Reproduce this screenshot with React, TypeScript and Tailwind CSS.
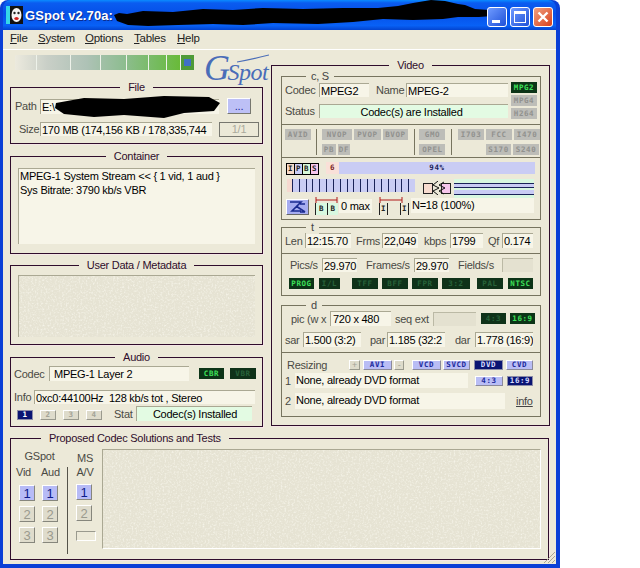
import { twMerge } from "tailwind-merge";

const font = "font-['Liberation_Sans',Arial,sans-serif]";

function Group({ label, className, left, children }: { label: string; className: string; left?: boolean; children: React.ReactNode }) {
  return (
    <div className={`relative border border-[#2f0d2c] shadow-[1px_1px_0_#f5e6e6] ${className}`}>
      <div className={`absolute inset-x-0 -top-[8px] flex ${left ? "justify-start pl-[30px]" : "justify-center"}`}>
        <span className="bg-[#ece9d8] px-[8px] text-[11px] leading-[14px] text-[#2f0d2c]">{label}</span>
      </div>
      {children}
    </div>
  );
}

function SubGroup({ label, className, children }: { label: string; className: string; children: React.ReactNode }) {
  return (
    <div className={`relative border border-[#77745f] ${className}`}>
      <div className="absolute left-[24px] -top-[7px] bg-[#ece9d8] px-[5px] text-[11px] leading-[13px] text-[#444]">{label}</div>
      {children}
    </div>
  );
}

function Field({ className, children }: { className: string; children?: React.ReactNode }) {
  return (
    <div className={twMerge("shrink-0 overflow-hidden whitespace-nowrap border-l border-t border-[#aaa893] bg-[#f7f5e8] pl-[1px] text-[11px] leading-[14px] text-black", className)}>
      {children}
    </div>
  );
}

function Lbl({ className, children }: { className?: string; children: React.ReactNode }) {
  return <span className={`shrink-0 whitespace-nowrap text-[11px] leading-[14px] text-[#4a4a44] ${className ?? ""}`}>{children}</span>;
}

const pixel = "font-['DejaVu_Sans_Mono',monospace] font-bold text-[7.5px] leading-none tracking-[0.6px]";

function Tag({ className, children }: { className: string; children: string }) {
  return <div className={`flex h-[11px] shrink-0 items-center justify-center bg-[#bdbdb8] text-[#91918e] ${pixel} ${className}`}>{children}</div>;
}

function Led({ on, className, children }: { on?: boolean; className: string; children: string }) {
  return (
    <div className={`flex h-[11px] shrink-0 items-center justify-center ${on ? "bg-[#0c3417] text-[#3ee05a]" : "bg-[#0f3219] text-[#28623a]"} ${pixel} ${className}`}>
      {children}
    </div>
  );
}

function SizeBtn({ active, className, children }: { active?: boolean; className: string; children: string }) {
  return (
    <div className={`flex h-[10px] shrink-0 items-center justify-center border ${active ? "border-[#8d8da8] bg-[#0a1472] text-[#d8dcff]" : "border-t-white border-l-white border-r-[#8b8a9b] border-b-[#8b8a9b] bg-[#b9bdf5] text-[#1c2a9c]"} ${pixel} ${className}`}>
      {children}
    </div>
  );
}

function NumBtn({ on, className, children }: { on?: boolean; className?: string; children: string }) {
  return (
    <div className={`flex h-[16px] w-[16px] items-center justify-center border border-t-white border-l-white border-r-[#86867c] border-b-[#86867c] text-[13px] leading-none ${on ? "bg-[#b7bbf6] text-[#0d1c8a]" : "bg-[#dfdccc] text-[#9a9a8e]"} ${className ?? ""}`}>
      {children}
    </div>
  );
}

function Pick({ on, children }: { on?: boolean; children: string }) {
  return (
    <div className={`flex h-[10px] w-[16px] shrink-0 items-center justify-center border ${on ? "border-[#8d8da8] bg-[#0a1472] text-white" : "border-t-white border-l-white border-r-[#9a9a8e] border-b-[#9a9a8e] bg-[#dedbcb] text-[#a3a397]"} ${pixel}`}>
      {children}
    </div>
  );
}

function MiniFrame({ className, children }: { className: string; children: string }) {
  return <div className={`flex h-[12px] w-[9px] items-center justify-center border border-black text-[#222] ${pixel} ${className}`}>{children}</div>;
}

function Scribble({ d, className, w, h }: { d: string; className: string; w: number; h: number }) {
  return (
    <svg className={className} width={w} height={h} viewBox={`0 0 ${w} ${h}`}>
      <path d={d} fill="#000" />
    </svg>
  );
}

function Speck() {
  return (
    <svg className="absolute inset-0 h-full w-full" aria-hidden>
      <filter id="speck">
        <feTurbulence type="fractalNoise" baseFrequency="0.55" numOctaves="2" seed="4" />
        <feColorMatrix values="0 0 0 0 0.98 0 0 0 0 0.97 0 0 0 0 0.9 0 0 0 1.6 -0.75" />
      </filter>
      <rect width="100%" height="100%" filter="url(#speck)" />
    </svg>
  );
}

function TitleBar() {
  return (
    <div className="relative flex h-[30px] shrink-0 items-center rounded-t-[8px] bg-[linear-gradient(180deg,#0a8bff_0%,#0a5cf0_10%,#0550e8_45%,#0861f6_85%,#0344cf_100%)] pl-[3px]">
      <svg width="17" height="18" viewBox="0 0 17 18" className="shrink-0">
        <rect x="0" y="0" width="4" height="18" fill="#35d8e8" />
        <rect x="4" y="0" width="13" height="18" fill="#111" />
        <ellipse cx="10.5" cy="9" rx="5" ry="7" fill="#f4f4f4" />
        <circle cx="8.5" cy="7" r="1.2" fill="#222" />
        <circle cx="12.5" cy="7" r="1.2" fill="#222" />
        <ellipse cx="10.5" cy="12.5" rx="2.2" ry="1.6" fill="#d02020" />
      </svg>
      <span className="ml-[2px] text-[13px] font-bold leading-none tracking-[0.1px] text-white [text-shadow:1px_1px_0_#0a2c90]">GSpot v2.70a:</span>
      <Scribble
        w={385}
        h={30}
        className="absolute left-[110px] top-0"
        d="M1 15 L6 13 L14 14 L30 11 L60 12 L90 9 L120 10 L150 8 L190 9 L230 8 L265 8 L285 6 L300 3 L318 0 L332 1 L345 4 L352 5 L362 9 L376 10 L384 13 L380 16 L366 17 L345 17 L330 19 L300 20 L270 19 L240 22 L205 24 L160 23 L130 25 L100 24 L65 25 L35 26 L15 25 L4 21 Z"
      />
      <div className="absolute right-[3px] top-[7px] flex gap-[3px]">
        <div className="relative h-[20px] w-[20px] rounded-[3px] border border-white bg-[linear-gradient(135deg,#6f9bff,#1e50d8)]">
          <div className="absolute bottom-[3px] left-[4px] h-[3px] w-[8px] bg-white" />
        </div>
        <div className="relative h-[20px] w-[20px] rounded-[3px] border border-white bg-[linear-gradient(135deg,#6f9bff,#1e50d8)]">
          <div className="absolute inset-x-[3px] bottom-[3px] top-[3px] border border-t-[3px] border-white" />
        </div>
        <div className="flex h-[20px] w-[20px] items-center justify-center rounded-[3px] border border-white bg-[linear-gradient(135deg,#f0a080,#d8401c)]">
          <svg width="12" height="12" viewBox="0 0 12 12">
            <path d="M1.5 1.5 L10.5 10.5 M10.5 1.5 L1.5 10.5" stroke="#fff" strokeWidth="2.4" />
          </svg>
        </div>
      </div>
    </div>
  );
}

function Menu() {
  const items: [string, string, string][] = [["F", "ile", "w-[28px]"], ["S", "ystem", "w-[47px]"], ["O", "ptions", "w-[49px]"], ["T", "ables", "w-[43px]"], ["H", "elp", "w-[30px]"]];
  return (
    <div className="flex h-[20px] shrink-0 items-center border-b border-white pl-[7px] pb-[1px]">
      {items.map(([a, b, w]) => (
        <span key={a} className={`text-[11.5px] leading-none text-[#222] ${w}`}>
          <span className="underline">{a}</span>
          {b}
        </span>
      ))}
    </div>
  );
}

function Progress() {
  const segs = ["w-[22px]", "w-[34px]", "w-[30px]", "w-[26px]", "w-[22px]", "w-[18px]", "w-[14px]"];
  return (
    <div className="ml-[5px] mt-[5px] flex h-[15px] w-[179px] shrink-0 bg-[linear-gradient(90deg,#eceade_0%,#c9cfc7_18%,#aec2b6_40%,#8fbd92_60%,#74bb5c_80%,#62ba22_100%)]">
      {segs.map((s) => (
        <div key={s} className={`border-r border-[#eef2ea] ${s}`} />
      ))}
      <div className="flex w-[13px] items-center justify-center bg-[#4f9a38]">
        <div className="h-[7px] w-[7px] bg-[#3f6fc4]" />
      </div>
    </div>
  );
}

function Logo() {
  return (
    <div className="relative ml-[10px] mt-[1px] h-[36px] w-[66px]">
      <span className="whitespace-nowrap font-['Liberation_Serif',serif] text-[24px] italic leading-[34px] tracking-[-0.5px] text-[#4a6db8]">
        <span className="-mr-[2px] text-[36px]">G</span>Spot
      </span>
      <svg width="32" height="10" viewBox="0 0 32 10" className="absolute left-[33px] top-[3px]">
        <path d="M0 8 Q16 5 32 1" stroke="#4a6db8" strokeWidth="1.2" fill="none" />
      </svg>
    </div>
  );
}

function LeftColumn() {
  return (
    <div className="w-[253px] shrink-0">
      <div className="flex h-[37px] items-start">
        <Progress />
        <Logo />
      </div>
      <Group label="File" className="h-[57px] w-[253px]">
        <div className="flex items-center pl-[4px] pt-[10px]">
          <Lbl className="w-[25px]">Path</Lbl>
          <div className="relative">
            <Field className="h-[15px] w-[179px]">E:\</Field>
            <Scribble
              w={168}
              h={24}
              className="absolute left-[14px] -top-[4px]"
              d="M2 8 L30 3 L70 4 L110 1 L155 2 L166 8 L160 16 L130 18 L110 23 L70 20 L40 22 L10 19 L1 13 Z"
            />
          </div>
          <div className="ml-[8px] flex h-[16px] w-[24px] items-center justify-center border border-t-white border-l-white border-r-[#77776f] border-b-[#77776f] bg-[#bdc0f6] text-[11px] leading-none text-[#1a2a9a]">
            ...
          </div>
        </div>
        <div className="mt-[6px] flex items-center pl-[8px]">
          <Lbl className="w-[21px]">Size</Lbl>
          <Field className="h-[14px] w-[172px]">170 MB (174,156 KB / 178,335,744</Field>
          <div className="ml-[7px] mt-[2px] flex h-[15px] w-[40px] items-center justify-center border border-[#77776f] text-[11px] leading-none text-[#aaa99c]">1/1</div>
        </div>
      </Group>
      <Group label="Container" className="mt-[12px] h-[98px] w-[253px]">
        <div className="pl-[7px] pt-[11px]">
          <Field className="h-[76px] w-[237px]">
            <div>MPEG-1 System Stream &lt;&lt; { "{" } 1 vid, 1 aud { "}" }</div>
            <div>Sys Bitrate: 3790 kb/s VBR</div>
          </Field>
        </div>
      </Group>
      <Group label="User Data / Metadata" className="mt-[11px] h-[80px] w-[253px]">
        <div className="pl-[7px] pt-[9px]">
          <div className="relative h-[62px] w-[237px] overflow-hidden border-l border-t border-[#aaa893] bg-[#e6e3d3]">
            <Speck />
          </div>
        </div>
      </Group>
      <Group label="Audio" className="mt-[12px] h-[70px] w-[253px]">
        <div className="flex items-center pl-[3px] pt-[8px]">
          <Lbl className="w-[35px]">Codec</Lbl>
          <Field className="h-[15px] w-[140px] pl-[4px]">MPEG-1 Layer 2</Field>
          <Led on className="ml-[10px] w-[25px]">CBR</Led>
          <Led className="ml-[6px] w-[26px]">VBR</Led>
        </div>
        <div className="mt-[9px] flex items-center pl-[3px]">
          <Lbl className="w-[20px]">Info</Lbl>
          <Field className="h-[14px] w-[221px] pl-[1px]">0xc0:44100Hz&nbsp; 128 kb/s tot , Stereo</Field>
        </div>
        <div className="mt-[2px] flex items-center pl-[6px]">
          <div className="flex gap-[7px] pt-[3px]">
            <Pick on>1</Pick>
            <Pick>2</Pick>
            <Pick>3</Pick>
            <Pick>4</Pick>
          </div>
          <Lbl className="ml-[12px] w-[22px]">Stat</Lbl>
          <Field className="h-[15px] w-[116px] bg-[#e3fbe3] text-center">Codec(s) Installed</Field>
        </div>
      </Group>
    </div>
  );
}

function Slots() {
  return (
    <div className="flex h-[13px] w-[128px] shrink-0 bg-[#c9ccf4]">
      <div className="w-[5px] bg-[#f6d9d0]" />
      {Array.from({ length: 18 }).map((_, i) => (
        <div key={i} className="w-[7px] border-l border-[#1a2258]" />
      ))}
    </div>
  );
}

function CodecSection() {
  return (
    <SubGroup label="c, S" className="ml-[9px] mt-[10px] w-[260px]">
      <div className="flex px-[3px] pt-[6px]">
        <div className="w-[223px]">
          <div className="flex items-center">
            <Lbl className="w-[34px]">Codec</Lbl>
            <Field className="h-[14px] w-[50px]">MPEG2</Field>
            <Lbl className="ml-[7px] w-[30px]">Name</Lbl>
            <Field className="h-[14px] w-[102px]">MPEG-2</Field>
          </div>
          <div className="mt-[7px] flex items-center">
            <Lbl className="w-[34px]">Status</Lbl>
            <Field className="h-[14px] w-[189px] bg-[#e3fbe3] pr-[6px] text-center">Codec(s) are Installed</Field>
          </div>
        </div>
        <div className="ml-[3px] flex -translate-y-[1px] flex-col gap-[2px]">
          <Led on className="w-[26px]">MPG2</Led>
          <Tag className="w-[26px]">MPG4</Tag>
          <Tag className="w-[26px]">H264</Tag>
        </div>
      </div>
      <div className="mt-[4px] flex h-[33px] gap-[5px] border-t border-[#77745f] pl-[3px] pt-[4px]">
        <Tag className="w-[26px]">AVID</Tag>
        <div className="h-[26px] w-px bg-[#77745f]" />
        <div className="w-[88px]">
          <div className="flex gap-[2px]">
            <Tag className="w-[30px]">NVOP</Tag>
            <Tag className="w-[27px]">PVOP</Tag>
            <Tag className="w-[25px]">BVOP</Tag>
          </div>
          <div className="mt-[4px] flex gap-[2px]">
            <Tag className="w-[14px]">PB</Tag>
            <Tag className="w-[12px]">DF</Tag>
          </div>
        </div>
        <div className="h-[26px] w-px bg-[#77745f]" />
        <div className="w-[27px]">
          <Tag className="w-[26px]">GMO</Tag>
          <Tag className="mt-[4px] w-[26px]">OPEL</Tag>
        </div>
        <div className="h-[26px] w-px bg-[#77745f]" />
        <div className="ml-[1px] w-[82px]">
          <div className="flex gap-[2px]">
            <Tag className="w-[26px]">I703</Tag>
            <Tag className="w-[26px]">FCC</Tag>
            <Tag className="w-[26px]">I470</Tag>
          </div>
          <div className="mt-[4px] flex justify-end gap-[2px] pr-[1px]">
            <Tag className="w-[25px]">S170</Tag>
            <Tag className="w-[26px]">S240</Tag>
          </div>
        </div>
      </div>
      <div className="h-[62px] border-t border-[#77745f] px-[3px] pt-[4px]">
        <div className="flex items-start">
          <div className="ml-[1px] flex pt-[1px]">
            <MiniFrame className="bg-[#f6d9c8]">I</MiniFrame>
            <MiniFrame className="-ml-px bg-[#c9ccf4]">P</MiniFrame>
            <MiniFrame className="-ml-px bg-[#d8f8d8]">B</MiniFrame>
            <MiniFrame className="-ml-px bg-[#f6c6ec]">S</MiniFrame>
          </div>
          <div className={`ml-[7px] flex h-[12px] w-[209px] text-[#7a2020] ${pixel}`}>
            <div className="flex w-[13px] items-center justify-center bg-[#f9e0d8]">6</div>
            <div className="flex flex-1 items-center justify-center bg-[#c9ccf4] text-[#1a2258]">94%</div>
          </div>
        </div>
        <div className="mt-[4px] flex items-start pl-[2px]">
          <Slots />
          <svg width="28" height="14" viewBox="0 0 28 14" className="ml-[8px] mt-[2px] shrink-0">
            <rect x="0.5" y="2.5" width="9" height="10" fill="#f7dccf" stroke="#222" />
            <rect x="18.5" y="2.5" width="9" height="10" fill="#f6c6ec" stroke="#222" />
            <path d="M15 0 L10 4 L16 7 L10 10 L15 14 M21 1 L16 4 L22 7 L16 10 L21 13" stroke="#111" fill="none" />
          </svg>
          <div className="ml-[3px] flex h-[20px] w-[80px] shrink-0 flex-col justify-center gap-[2px] bg-[#d8f8e0]">
            <div className="h-[5px] border-y border-[#1a2258] bg-[#c9ccf4]" />
            <div className="h-[5px] border-b border-[#1a2258] bg-[#c9ccf4]" />
          </div>
        </div>
        <div className="-mt-[2px] flex items-start pl-[1px]">
          <div className="mt-[2px] flex h-[16px] w-[23px] shrink-0 items-center justify-center border border-t-white border-l-white border-r-[#666] border-b-[#666] bg-[#a6acf0]">
            <svg width="19" height="12" viewBox="0 0 19 12">
              <path d="M2 1 L13 1 L4 10 L13 10 M8 5 L17 11 M17 3 L12 3 M17 11 L12 11" stroke="#1a2a90" strokeWidth="1.6" fill="none" />
            </svg>
          </div>
          <div className="ml-[6px] w-[23px] shrink-0">
            <svg width="23" height="6" viewBox="0 0 23 6" className="block">
              <path d="M1 3 L22 3 M1 0 V6 M22 0 V6" stroke="#b01818" />
            </svg>
            <div className={`flex h-[12px] items-center text-[#222] ${pixel}`}>
              <div className="flex h-full w-[12px] items-center justify-center border-l border-[#222] bg-[#d8f8e0]">B</div>
              <div className="flex h-full w-[11px] items-center justify-center border-l border-[#222] bg-[#d8f8e0]">B</div>
            </div>
          </div>
          <Field className="ml-[1px] mt-[2px] h-[14px] w-[33px] border-0 pl-[2px]">0 max</Field>
          <div className="ml-[7px] w-[30px] shrink-0">
            <svg width="24" height="6" viewBox="0 0 24 6" className="block">
              <path d="M1 3 L23 3 M1 0 V6 M23 0 V6" stroke="#b01818" />
            </svg>
            <div className={`flex h-[12px] items-center text-[#222] ${pixel}`}>
              <div className="flex h-full w-[9px] items-center justify-center border-x border-[#222]">I</div>
              <div className="ml-[12px] flex h-full w-[9px] items-center justify-center border-x border-[#222]">I</div>
            </div>
          </div>
          <Field className="ml-[2px] mt-[1px] h-[15px] w-[123px] border-0 pl-[1px]">N=18 (100%)</Field>
        </div>
      </div>
    </SubGroup>
  );
}

function TimeSection() {
  return (
    <SubGroup label="t" className="ml-[9px] mt-[7px] h-[69px] w-[260px]">
      <div className="flex items-center pl-[3px] pt-[5px]">
        <Lbl className="w-[20px]">Len</Lbl>
        <Field className="h-[15px] w-[46px]">12:15.70</Field>
        <Lbl className="ml-[5px] w-[26px]">Frms</Lbl>
        <Field className="h-[15px] w-[36px]">22,049</Field>
        <Lbl className="ml-[6px] w-[26px]">kbps</Lbl>
        <Field className="h-[15px] w-[33px]">1799</Field>
        <Lbl className="ml-[5px] w-[14px]">Qf</Lbl>
        <Field className="h-[15px] w-[31px]">0.174</Field>
      </div>
      <div className="mt-[5px] border-t border-[#77745f] pl-[8px] pt-[4px]">
        <div className="flex items-center">
          <Lbl className="w-[32px]">Pics/s</Lbl>
          <Field className="h-[14px] w-[35px]">29.970</Field>
          <Lbl className="ml-[9px] w-[48px]">Frames/s</Lbl>
          <Field className="h-[14px] w-[35px]">29.970</Field>
          <Lbl className="ml-[9px] w-[44px]">Fields/s</Lbl>
          <Field className="h-[14px] w-[31px] border-[#bbb9a5] bg-[#e4e1d0]" />
        </div>
        <div className="-ml-[1px] mt-[6px] flex">
          <Led on className="w-[25px]">PROG</Led>
          <Led className="ml-[5px] w-[21px]">I/L</Led>
          <Led className="ml-[12px] w-[26px]">TFF</Led>
          <Led className="ml-[4px] w-[26px]">BFF</Led>
          <Led className="ml-[4px] w-[26px]">FPR</Led>
          <Led className="ml-[4px] w-[28px]">3:2</Led>
          <Led className="ml-[7px] w-[26px]">PAL</Led>
          <Led on className="ml-[5px] w-[25px]">NTSC</Led>
        </div>
      </div>
    </SubGroup>
  );
}

function DisplaySection() {
  return (
    <SubGroup label="d" className="ml-[9px] mt-[9px] h-[112px] w-[260px]">
      <div className="flex items-center pl-[9px] pt-[5px]">
        <Lbl className="w-[39px]">pic (w x</Lbl>
        <Field className="h-[15px] w-[61px] pl-[2px]">720 x 480</Field>
        <Lbl className="ml-[4px] w-[37px]">seq ext</Lbl>
        <Field className="ml-[1px] h-[14px] w-[43px] border-[#bbb9a5] bg-[#e4e1d0]" />
        <Led className="ml-[5px] w-[25px]">4:3</Led>
        <Led on className="ml-[4px] w-[25px]">16:9</Led>
      </div>
      <div className="mt-[6px] flex items-center pl-[3px]">
        <Lbl className="w-[18px]">sar</Lbl>
        <Field className="h-[15px] w-[58px]">1.500 (3:2)</Field>
        <Lbl className="ml-[9px] w-[17px]">par</Lbl>
        <Field className="h-[15px] w-[58px]">1.185 (32:2</Field>
        <Lbl className="ml-[10px] w-[20px]">dar</Lbl>
        <Field className="h-[15px] w-[58px]">1.778 (16:9)</Field>
      </div>
      <div className="mt-[5px] border-t border-[#77745f] pl-[3px]">
        <div className="flex items-center pt-[5px]">
          <Lbl className="ml-[2px] w-[62px]">Resizing</Lbl>
          <div className="flex h-[10px] w-[11px] shrink-0 items-center justify-center border border-t-white border-l-white border-r-[#9a9a8e] border-b-[#9a9a8e] bg-[#dedbcb] text-[9px] leading-none text-[#a3a397]">+</div>
          <SizeBtn className="ml-[3px] w-[29px]">AVI</SizeBtn>
          <div className="ml-[2px] flex h-[10px] w-[10px] shrink-0 items-center justify-center border border-t-white border-l-white border-r-[#9a9a8e] border-b-[#9a9a8e] bg-[#dedbcb] text-[9px] leading-none text-[#a3a397]">-</div>
          <SizeBtn className="ml-[8px] w-[29px]">VCD</SizeBtn>
          <SizeBtn className="ml-[2px] w-[27px]">SVCD</SizeBtn>
          <SizeBtn active className="ml-[4px] w-[29px]">DVD</SizeBtn>
          <SizeBtn className="ml-[3px] w-[27px]">CVD</SizeBtn>
        </div>
        <div className="mt-[1px] flex items-center">
          <Lbl className="w-[10px]">1</Lbl>
          <Field className="h-[15px] w-[173px] border-0 pl-[1px]">None, already DVD format</Field>
          <SizeBtn className="ml-[7px] w-[28px]">4:3</SizeBtn>
          <SizeBtn active className="ml-[4px] w-[26px]">16:9</SizeBtn>
        </div>
        <div className="mt-[5px] flex items-center">
          <Lbl className="w-[10px]">2</Lbl>
          <Field className="h-[16px] w-[210px] border-0 pl-[1px]">None, already DVD format</Field>
          <span className="ml-[11px] text-[11px] leading-none text-[#444] underline">info</span>
        </div>
      </div>
    </SubGroup>
  );
}

function Proposed() {
  return (
    <Group left label="Proposed Codec Solutions and Tests" className="ml-[7px] mt-[11px] flex h-[122px] w-[539px]">
      <div className="w-[56px] shrink-0 pl-[5px] pt-[10px] text-center text-[11px] leading-[14px] text-[#4a4a44]">
        <div className="w-[47px]">GSpot</div>
        <div className="mt-[2px] flex gap-[10px]">
          <span>Vid</span>
          <span>Aud</span>
        </div>
        <div className="ml-[3px] mt-[6px] flex gap-[7px]">
          <NumBtn on>1</NumBtn>
          <NumBtn on>1</NumBtn>
        </div>
        <div className="ml-[3px] mt-[5px] flex gap-[7px]">
          <NumBtn>2</NumBtn>
          <NumBtn>2</NumBtn>
        </div>
        <div className="ml-[3px] mt-[5px] flex gap-[7px]">
          <NumBtn>3</NumBtn>
          <NumBtn>3</NumBtn>
        </div>
      </div>
      <div className="mt-[28px] h-[87px] w-px shrink-0 bg-[#55534a]" />
      <div className="ml-[8px] w-[26px] shrink-0 pt-[12px] text-center text-[11px] leading-[14px] text-[#4a4a44]">
        <div className="w-[18px]">MS</div>
        <div className="w-[18px]">A/V</div>
        <NumBtn on className="mt-[5px]">1</NumBtn>
        <NumBtn className="mt-[5px]">2</NumBtn>
        <div className="mt-[10px] h-[10px] w-[20px] border border-[#9a9a8e] border-r-white border-b-white" />
      </div>
      <div className="relative ml-0 mt-[10px] h-[100px] w-[439px] shrink-0 overflow-hidden border-l border-t border-b border-r border-[#aaa893] border-b-white border-r-white bg-[#e6e3d3]">
        <Speck />
      </div>
    </Group>
  );
}

export default function App() {
  return (
    <div className={`h-[568px] w-[640px] overflow-hidden bg-white tracking-[-0.25px] ${font}`}>
      <div className="flex h-[568px] w-[560px] flex-col rounded-t-[8px] bg-[#0a3fd6] px-[3px] pb-[4px] pr-[4px]">
        <TitleBar />
        <div className="relative min-h-0 flex-1 bg-[#ece9d8]">
          <Menu />
          <div className="flex pl-[7px]">
            <LeftColumn />
            <div className="ml-[8px] mt-[15px] h-[361px] w-[279px] shrink-0">
              <Group label="Video" className="h-[361px] w-[279px]">
                <CodecSection />
                <TimeSection />
                <DisplaySection />
              </Group>
            </div>
          </div>
          <Proposed />
          <svg width="14" height="14" viewBox="0 0 14 14" className="absolute bottom-0 right-0">
            <path d="M13 2 L2 13 M13 6 L6 13 M13 10 L10 13" stroke="#a8a593" />
          </svg>
        </div>
      </div>
    </div>
  );
}
